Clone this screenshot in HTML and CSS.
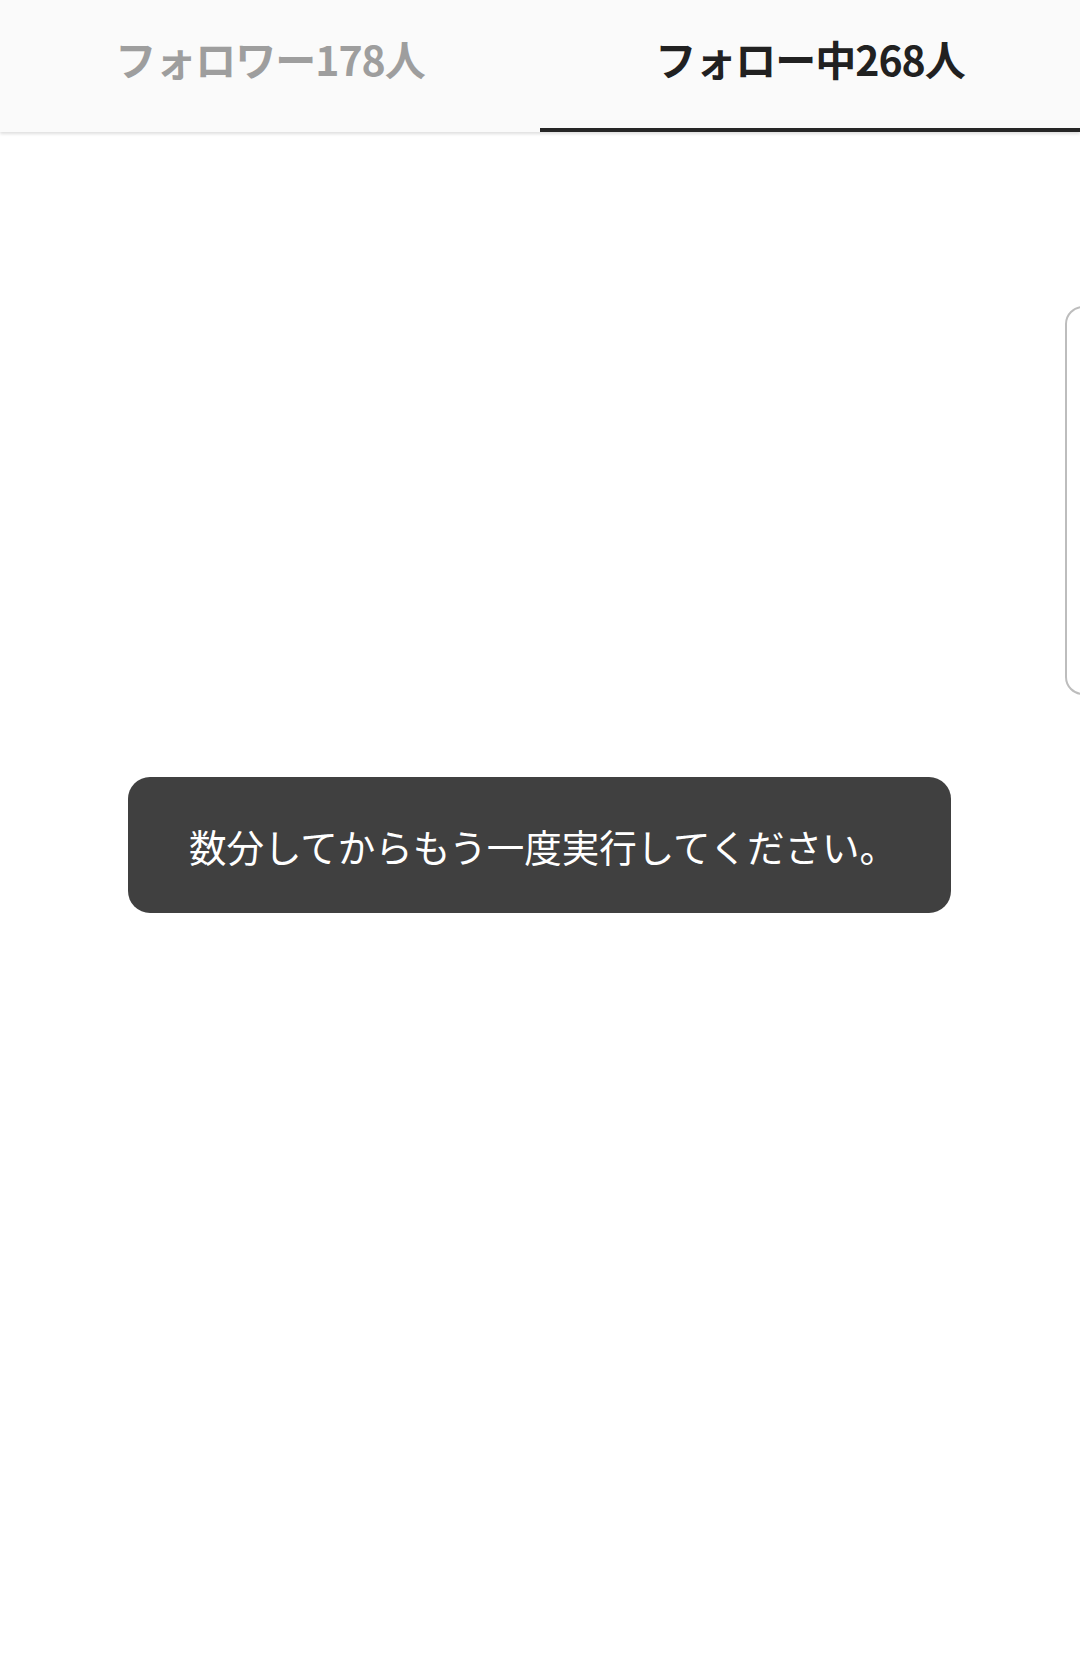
FILE: index.html
```html
<!DOCTYPE html>
<html lang="ja">
<head>
<meta charset="utf-8">
<title>フォロー</title>
<link rel="stylesheet" href="styles.css">
</head>
<body>
<div class="page">
  <nav class="tabs">
    <div class="tab">フォロワー178人</div>
    <div class="tab active">フォロー中268人</div>
  </nav>
  <main class="content"></main>
  <div class="edge-panel"></div>
  <div class="toast">数分してからもう一度実行してください。</div>
</div>
</body>
</html>
```
FILE: styles.css
```css
html, body {
  margin: 0;
  padding: 0;
  background: #ffffff;
  overflow: hidden;
}
.page {
  position: relative;
  width: 1080px;
  height: 1662px;
  overflow: hidden;
  font-family: "Noto Sans CJK JP", "Noto Sans", sans-serif;
}
.tabs {
  display: flex;
  height: 132px;
  background: #fafafa;
  box-shadow: 0 2px 3px rgba(0, 0, 0, 0.13);
  position: relative;
  z-index: 1;
}
.tab {
  flex: 1;
  display: flex;
  align-items: center;
  justify-content: center;
  box-sizing: border-box;
  padding-bottom: 13px;
  font-size: 41px;
  font-weight: 700;
  color: #9e9e9e;
  letter-spacing: -1px;
  border-bottom: 4px solid transparent;
}
.tab.active {
  color: #212121;
  border-bottom-color: #262626;
}
.content {
  height: 1530px;
  background: #ffffff;
}
.edge-panel {
  position: absolute;
  left: 1065px;
  top: 306px;
  width: 60px;
  height: 385px;
  border: 2px solid #bdbdbd;
  border-radius: 18px;
  background: #ffffff;
}
.toast {
  position: absolute;
  left: 128px;
  top: 777px;
  width: 823px;
  height: 136px;
  box-sizing: border-box;
  padding-left: 61px;
  display: flex;
  align-items: center;
  background: #404040;
  border-radius: 22px;
  color: #ffffff;
  font-size: 37.5px;
  font-weight: 400;
  letter-spacing: 0;
}
```
